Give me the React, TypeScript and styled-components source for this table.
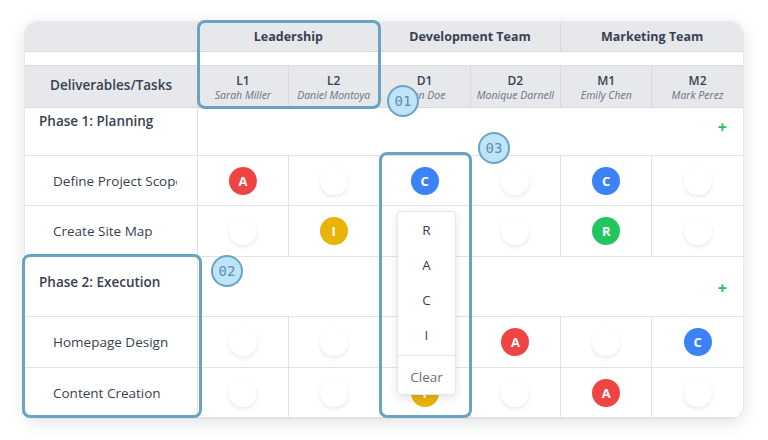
import React from "react";
import styled, { createGlobalStyle } from "styled-components";

const Global = createGlobalStyle`
  html, body { margin: 0; padding: 0; background: #ffffff; }
  body { font-family: "Open Sans", "Noto Sans", sans-serif; color: #374151; }
`;

type Role = "R" | "A" | "C" | "I" | "";

const roleColor: Record<string, string> = {
  R: "#22c55e",
  A: "#ef4444",
  C: "#3b82f6",
  I: "#eab308",
};

const people = [
  { id: "L1", name: "Sarah Miller" },
  { id: "L2", name: "Daniel Montoya" },
  { id: "D1", name: "John Doe" },
  { id: "D2", name: "Monique Darnell" },
  { id: "M1", name: "Emily Chen" },
  { id: "M2", name: "Mark Perez" },
];

const phases: { title: string; top: number; height: number; tasks: { name: string; roles: Role[] }[] }[] = [
  {
    title: "Phase 1: Planning",
    top: 12,
    height: 48,
    tasks: [
      { name: "Define Project Scope", roles: ["A", "", "C", "", "C", ""] },
      { name: "Create Site Map", roles: ["", "I", "", "", "R", ""] },
    ],
  },
  {
    title: "Phase 2: Execution",
    top: 24,
    height: 60,
    tasks: [
      { name: "Homepage Design", roles: ["", "", "", "A", "", "C"] },
      { name: "Content Creation", roles: ["", "", "I", "", "A", ""] },
    ],
  },
];

const Page = styled.div`
  padding: 22px 25px;
`;

const Stage = styled.div`
  position: relative;
  width: 718px;
`;

const Card = styled.div`
  display: grid;
  grid-template-columns: 173px repeat(6, 1fr);
  background: #ffffff;
  border-radius: 12px;
  overflow: hidden;
  box-shadow: 0 4px 18px rgba(15, 23, 42, 0.13), 0 0 0 1px rgba(15, 23, 42, 0.04);
`;

const GroupHead = styled.div<{ $span: number; $last?: boolean }>`
  grid-column: span ${(p) => p.$span};
  height: 30px;
  box-sizing: border-box;
  background: #e6e8ec;
  border-bottom: 1px solid #d7dbe0;
  border-right: ${(p) => (p.$last ? "none" : "1px solid #d7dbe0")};
  display: flex;
  align-items: center;
  justify-content: center;
  font-size: 12.5px;
  font-weight: 700;
  color: #374151;
`;

const Spacer = styled.div`
  grid-column: 1 / -1;
  height: 14px;
  box-sizing: border-box;
  border-bottom: 1px solid #d7dbe0;
`;

const TaskHead = styled.div`
  height: 42px;
  box-sizing: border-box;
  padding-bottom: 4px;
  background: #e6e8ec;
  border-right: 1px solid #d7dbe0;
  border-bottom: 1px solid #d7dbe0;
  display: flex;
  align-items: center;
  justify-content: center;
  font-size: 13.5px;
  font-weight: 600;
  color: #374151;
`;

const PersonHead = styled.div<{ $last?: boolean }>`
  height: 42px;
  box-sizing: border-box;
  padding-top: 2px;
  background: #e6e8ec;
  border-right: ${(p) => (p.$last ? "none" : "1px solid #d7dbe0")};
  border-bottom: 1px solid #d7dbe0;
  display: flex;
  flex-direction: column;
  align-items: center;
  justify-content: center;
  line-height: 14px;
`;

const PersonId = styled.span`
  font-size: 12px;
  font-weight: 600;
  color: #374151;
`;

const PersonName = styled.span`
  font-size: 10.5px;
  font-style: italic;
  color: #6b7280;
  white-space: nowrap;
`;

const PhaseLabel = styled.div<{ $h: number; $top: number }>`
  height: ${(p) => p.$h}px;
  box-sizing: border-box;
  padding: ${(p) => p.$top - 8}px 0 0 14px;
  border-right: 1px solid #dfe2e6;
  border-bottom: 1px solid #dfe2e6;
  font-size: 13.5px;
  font-weight: 600;
  color: #374151;
`;

const PhaseFill = styled.div<{ $h: number; $top: number }>`
  grid-column: span 6;
  height: ${(p) => p.$h}px;
  box-sizing: border-box;
  padding: ${(p) => p.$top}px 16px 0 0;
  border-bottom: 1px solid #dfe2e6;
  display: flex;
  justify-content: flex-end;
  align-items: flex-start;
`;

const AddBtn = styled.span`
  color: #22c55e;
  font-size: 16px;
  font-weight: 700;
  line-height: 14px;
`;

const TaskCell = styled.div<{ $h: number }>`
  height: ${(p) => p.$h}px;
  box-sizing: border-box;
  padding: 0 20px 0 28px;
  border-right: 1px solid #dfe2e6;
  border-bottom: 1px solid #dfe2e6;
  display: flex;
  align-items: center;
  font-size: 13.5px;
  color: #374151;
`;

const TaskName = styled.span`
  min-width: 0;
  overflow: hidden;
  white-space: nowrap;
`;

const RoleCell = styled.div<{ $h: number; $last?: boolean }>`
  height: ${(p) => p.$h}px;
  box-sizing: border-box;
  border-right: ${(p) => (p.$last ? "none" : "1px solid #dfe2e6")};
  border-bottom: 1px solid #dfe2e6;
  display: flex;
  align-items: center;
  justify-content: center;
`;

const Dot = styled.span<{ $role: Role }>`
  width: 28px;
  height: 28px;
  border-radius: 50%;
  display: flex;
  align-items: center;
  justify-content: center;
  background: ${(p) => (p.$role ? roleColor[p.$role] : "#ffffff")};
  box-shadow: ${(p) => (p.$role ? "none" : "0 2px 4px rgba(0, 0, 0, 0.09)")};
  color: #ffffff;
  font-size: 13px;
  font-weight: 700;
`;

const Frame = styled.div<{ $x: number; $y: number; $w: number; $h: number }>`
  position: absolute;
  left: ${(p) => p.$x}px;
  top: ${(p) => p.$y}px;
  width: ${(p) => p.$w}px;
  height: ${(p) => p.$h}px;
  box-sizing: border-box;
  border: 3px solid #6aa3c2;
  border-radius: 8px;
  pointer-events: none;
`;

const Badge = styled.span<{ $x: number; $y: number }>`
  position: absolute;
  left: ${(p) => p.$x - 16}px;
  top: ${(p) => p.$y - 16}px;
  width: 32px;
  height: 32px;
  box-sizing: border-box;
  border-radius: 50%;
  background: #bfe3f7;
  border: 2.5px solid #6aa3c2;
  display: flex;
  align-items: center;
  justify-content: center;
  font-family: "DejaVu Sans Mono", "Liberation Mono", monospace;
  font-size: 14px;
  color: #5b8fb0;
`;

const Menu = styled.div`
  position: absolute;
  left: 372px;
  top: 189px;
  width: 59px;
  box-sizing: border-box;
  background: #ffffff;
  border: 1px solid #e3e6ea;
  border-radius: 4px;
  box-shadow: 0 3px 8px rgba(15, 23, 42, 0.12);
  overflow: hidden;
`;

const MenuList = styled.div`
  padding-bottom: 3px;
  border-bottom: 1px solid #e3e6ea;
`;

const MenuItem = styled.div`
  height: 35px;
  display: flex;
  align-items: center;
  justify-content: center;
  font-size: 13.5px;
  color: #374151;
`;

const MenuClear = styled.div`
  height: 38px;
  padding-top: 4px;
  box-sizing: border-box;
  display: flex;
  align-items: center;
  justify-content: center;
  font-size: 13.5px;
  color: #6b7280;
`;

export default function App() {
  return (
    <Page>
      <Global />
      <Stage>
        <Card>
          <GroupHead $span={1} />
          <GroupHead $span={2}>Leadership</GroupHead>
          <GroupHead $span={2}>Development Team</GroupHead>
          <GroupHead $span={2} $last>
            Marketing Team
          </GroupHead>
          <Spacer />
          <TaskHead>Deliverables/Tasks</TaskHead>
          {people.map((p, i) => (
            <PersonHead key={p.id} $last={i === people.length - 1}>
              <PersonId>{p.id}</PersonId>
              <PersonName>{p.name}</PersonName>
            </PersonHead>
          ))}
          {phases.map((ph, pi) => (
            <React.Fragment key={ph.title}>
              <PhaseLabel $h={ph.height} $top={ph.top}>
                {ph.title}
              </PhaseLabel>
              <PhaseFill $h={ph.height} $top={ph.top}>
                <AddBtn>+</AddBtn>
              </PhaseFill>
              {ph.tasks.map((t, ti) => {
                const h = pi === 0 && ti === 1 ? 51 : pi === 1 && ti === 0 ? 51 : 50;
                return (
                  <React.Fragment key={t.name}>
                    <TaskCell $h={h}>
                      <TaskName>{t.name}</TaskName>
                    </TaskCell>
                    {t.roles.map((r, ri) => (
                      <RoleCell key={ri} $h={h} $last={ri === t.roles.length - 1}>
                        <Dot $role={r}>{r}</Dot>
                      </RoleCell>
                    ))}
                  </React.Fragment>
                );
              })}
            </React.Fragment>
          ))}
        </Card>

        <Menu>
          <MenuList>
            <MenuItem>R</MenuItem>
            <MenuItem>A</MenuItem>
            <MenuItem>C</MenuItem>
            <MenuItem>I</MenuItem>
          </MenuList>
          <MenuClear>Clear</MenuClear>
        </Menu>

        <Frame $x={172} $y={-2} $w={184} $h={89} />
        <Frame $x={-3} $y={232} $w={180} $h={164} />
        <Frame $x={354} $y={130} $w={93} $h={266} />
        <Badge $x={378} $y={79}>01</Badge>
        <Badge $x={202} $y={249}>02</Badge>
        <Badge $x={469} $y={126}>03</Badge>
      </Stage>
    </Page>
  );
}
